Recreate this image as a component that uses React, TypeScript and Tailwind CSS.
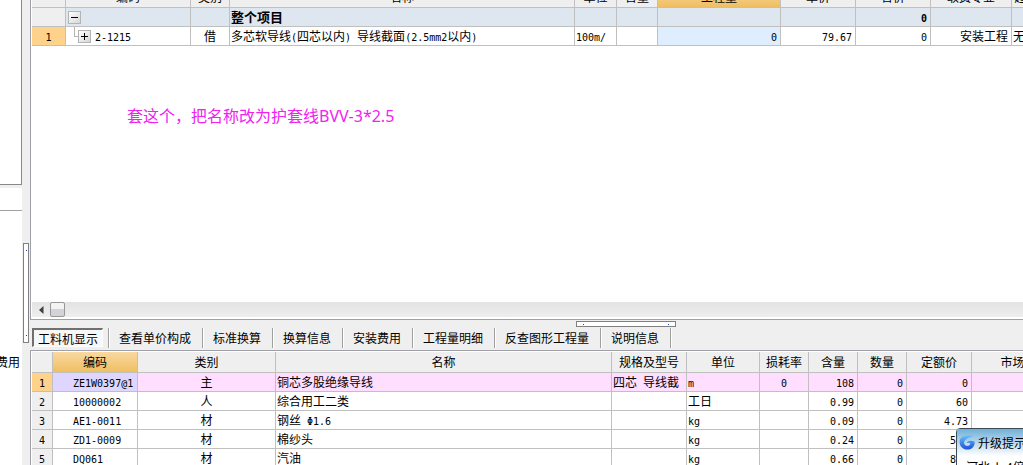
import React from 'react';
import clsx from 'clsx';

interface Column {
  label: string;
  width: string;
  align?: string;
  active?: boolean;
}

const BUDGET_COLUMNS: Column[] = [
  { label: '', width: 'w-[34px]' },
  { label: '编码', width: 'w-[125px]' },
  { label: '类别', width: 'w-[39px]' },
  { label: '名称', width: 'w-[345px]' },
  { label: '单位', width: 'w-[42px]' },
  { label: '含量', width: 'w-[41px]' },
  { label: '工程量', width: 'w-[123px]', active: true },
  { label: '单价', width: 'w-[75px]' },
  { label: '合价', width: 'w-[75px]' },
  { label: '取费专业', width: 'w-[81px]' },
  { label: '超高类别', width: 'w-[54px]' },
];

const RESOURCE_COLUMNS: Column[] = [
  { label: '', width: 'w-[21px]' },
  { label: '编码', width: 'w-[85px]', align: 'pl-5', active: true },
  { label: '类别', width: 'w-[138px]', align: 'text-center' },
  { label: '名称', width: 'w-[336px]', align: 'pl-px' },
  { label: '规格及型号', width: 'w-[75px]', align: 'pl-px' },
  { label: '单位', width: 'w-[73px]', align: 'pl-px' },
  { label: '损耗率', width: 'w-[49px]', align: 'text-center' },
  { label: '含量', width: 'w-[49px]', align: 'text-right pr-[3px]' },
  { label: '数量', width: 'w-[49px]', align: 'text-right pr-[3px]' },
  { label: '定额价', width: 'w-[65px]', align: 'text-right pr-[3px]' },
  { label: '市场价', width: 'w-[94px]', align: 'text-right pr-[3px]' },
];

const RESOURCES = [
  ['1', 'ZE1W0397@1', '主', '铜芯多股绝缘导线', '四芯 导线截', 'm', '0', '108', '0', '0', ''],
  ['2', '10000002', '人', '综合用工二类', '', '工日', '', '0.99', '0', '60', ''],
  ['3', 'AE1-0011', '材', '钢丝 Φ1.6', '', 'kg', '', '0.09', '0', '4.73', ''],
  ['4', 'ZD1-0009', '材', '棉纱头', '', 'kg', '', '0.24', '0', '5.8', ''],
  ['5', 'DQ061', '材', '汽油', '', 'kg', '', '0.66', '0', '8.1', ''],
];

const TABS = ['查看单价构成', '标准换算', '换算信息', '安装费用', '工程量明细', '反查图形工程量', '说明信息'];

const CELL = 'border-r border-b border-[#c0c0c0] p-0 leading-[18px] whitespace-nowrap overflow-hidden';

// Latin runs use a narrow mono face so that two of them take one ideograph
const Mixed: React.FC<{ text: string }> = ({ text }) => (
  <>
    {text.split(/([\x20-\x7eΦ]+)/).filter(Boolean).map((part, i) =>
      /^[\x20-\x7eΦ]/.test(part) ? (
        <span key={i} className="font-['DejaVu_Sans_Mono',monospace] text-[10px] leading-none whitespace-pre">{part}</span>
      ) : (
        <React.Fragment key={i}>{part}</React.Fragment>
      )
    )}
  </>
);

const HeaderRow: React.FC<{ columns: Column[] }> = ({ columns }) => (
  <thead>
    <tr>
      {columns.map((col, i) => (
        <th
          key={i}
          scope="col"
          className={clsx(
            CELL,
            col.width,
            'h-[21px] font-normal',
            col.active ? 'bg-linear-to-b from-[#f8d9a0] to-[#f0be60]' : 'bg-[#efefef]'
          )}
        >
          {col.label}
        </th>
      ))}
    </tr>
  </thead>
);

const TreeToggle: React.FC<{ open: boolean }> = ({ open }) => (
  <button
    type="button"
    aria-label={open ? '折叠' : '展开'}
    className="flex h-[13px] w-[13px] shrink-0 items-center justify-center border border-[#b4b4b4] bg-linear-to-br from-white to-[#d6d6d6]"
  >
    <svg width="9" height="9" viewBox="0 0 9 9" stroke="#000" shapeRendering="crispEdges">
      <path d="M1 4.5H8" />
      {!open && <path d="M4.5 1V8" />}
    </svg>
  </button>
);

const BudgetTable = () => (
  <table className="-mt-[13px] w-full table-fixed border-separate border-spacing-0">
    <HeaderRow columns={BUDGET_COLUMNS} />
    <tbody>
      <tr className="h-[19px] bg-[#dee6f0] font-bold">
        <td className={clsx(CELL, 'bg-[#efefef]')}></td>
        <td className={clsx(CELL, 'pl-0.5')}>
          <TreeToggle open />
        </td>
        <td className={CELL}></td>
        <td className={clsx(CELL, 'pl-px text-[13px]')}>整个项目</td>
        <td className={CELL}></td>
        <td className={CELL}></td>
        <td className={CELL}></td>
        <td className={CELL}></td>
        <td className={clsx(CELL, 'pr-[3px] text-right')}><Mixed text="0" /></td>
        <td className={CELL}></td>
        <td className={CELL}></td>
      </tr>
      <tr className="h-[19px] bg-white">
        <td className={clsx(CELL, 'bg-[#ffd28c] text-center')}><Mixed text="1" /></td>
        <td className={clsx(CELL, 'pl-2')}>
          <div className="flex h-[18px] items-center">
            <svg width="4" height="18" viewBox="0 0 4 18" fill="none" stroke="#b4b4b4" shapeRendering="crispEdges">
              <path d="M0.5 0V9.5H4" />
            </svg>
            <TreeToggle open={false} />
            <span className="pl-1"><Mixed text="2-1215" /></span>
          </div>
        </td>
        <td className={clsx(CELL, 'text-center')}>借</td>
        <td className={clsx(CELL, 'pl-px')}><Mixed text="多芯软导线(四芯以内) 导线截面(2.5mm2以内)" /></td>
        <td className={clsx(CELL, 'pl-px')}><Mixed text="100m/" /></td>
        <td className={CELL}></td>
        <td className={clsx(CELL, 'bg-[#deeeff] pr-[3px] text-right')}><Mixed text="0" /></td>
        <td className={clsx(CELL, 'pr-[3px] text-right')}><Mixed text="79.67" /></td>
        <td className={clsx(CELL, 'pr-[3px] text-right')}><Mixed text="0" /></td>
        <td className={clsx(CELL, 'pr-[3px] text-right')}>安装工程</td>
        <td className={clsx(CELL, 'pl-px')}>无</td>
      </tr>
    </tbody>
  </table>
);

const ResourceTable = () => (
  <table className="w-full table-fixed border-separate border-spacing-0">
    <HeaderRow columns={RESOURCE_COLUMNS} />
    <tbody>
      {RESOURCES.map((row, r) => (
        <tr key={row[1]} className={clsx('h-[19px]', r === 0 ? 'bg-[#ffdeff]' : 'bg-white')}>
          {row.map((value, c) => (
            <td
              key={c}
              className={clsx(
                CELL,
                c === 0 ? 'text-center' : RESOURCE_COLUMNS[c].align,
                c === 0 && (r === 0 ? 'bg-[#ffd28c]' : 'bg-[#efefef]'),
                c === 1 && r === 0 && 'bg-[#ded6ff]'
              )}
            >
              <Mixed text={value} />
            </td>
          ))}
        </tr>
      ))}
    </tbody>
  </table>
);

const Scrollbar = () => (
  <div className="flex h-[15px] items-center bg-linear-to-b from-[#e3e3e3] to-[#eeeeee]">
    <button type="button" aria-label="向左滚动" className="flex h-[15px] w-[18px] items-center justify-center">
      <svg width="5" height="8" viewBox="0 0 5 8" fill="#404040">
        <path d="M4.5 0V8L0 4Z" />
      </svg>
    </button>
    <div className="h-[15px] w-[15px] rounded-xs border border-[#989898] bg-linear-to-b from-[#f4f4f4] from-50% to-[#d4d4d8] to-50%"></div>
  </div>
);

const UpgradePopup = () => (
  <div role="dialog" aria-label="升级提示" className="absolute top-[428px] left-[956px] w-[200px] rounded-tl-sm border border-[#3c4a56] bg-white">
    <div className="flex h-[27px] items-center gap-0.5 bg-linear-to-b from-[#6fb0d8] to-white pl-0.5">
      <svg width="17" height="17" viewBox="0 0 18 17">
        <defs>
          <linearGradient id="swirl" x1="0" y1="0" x2="0" y2="1">
            <stop offset="0" stopColor="#6cc4f4" />
            <stop offset="1" stopColor="#1c50d8" />
          </linearGradient>
        </defs>
        <path
          fill="url(#swirl)"
          d="M15.5 1.5C10 0 3 0.5 1 5.5C-0.5 11 3 16 9 16C14 16 17 12 16.5 7.5C13 6 9 6.5 8 9C9.5 8.5 11.5 8.5 12 9.5C11.5 12.5 6.5 13 5.5 9.5C4.5 5.5 9.5 3.5 15.5 1.5Z"
        />
      </svg>
      <span>升级提示</span>
    </div>
    <p className="pt-0.5 pl-[9px] leading-[18px] whitespace-pre">河北  h.4倍</p>
  </div>
);

export default function App() {
  return (
    <div className="relative flex h-screen overflow-hidden bg-[#efefef] font-['Noto_Sans_CJK_SC',sans-serif] text-xs text-black">
      {/* Edge of the project tree on the left */}
      <aside className="flex w-[22px] shrink-0 flex-col gap-[3px]">
        <div className="h-[185px] shrink-0 border-r border-b border-[#888888] bg-white"></div>
        <div className="flex-1 overflow-hidden bg-white">
          <div className="h-[23px] border-b border-[#a0a0a0]"></div>
          <div className="flex justify-end pt-[142px] pr-0.5 leading-[18px] whitespace-nowrap">费用</div>
        </div>
      </aside>

      <div className="flex w-2 shrink-0 flex-col pl-px">
        <div className="mt-[243px] flex h-[100px] w-[6px] flex-col items-center justify-between border border-[#808080] bg-white py-[6px]">
          <span className="h-px w-px bg-blue-800"></span>
          <span className="h-px w-px bg-blue-800"></span>
        </div>
      </div>

      <main className="flex min-w-0 flex-1 flex-col">
        <section className="shrink-0 overflow-hidden border-b border-l border-[#a0a0a8] bg-white pb-0.5 pl-px">
          <BudgetTable />
          <div className="h-64 pt-[58px] pl-[95px]">
            <p className="font-['Noto_Sans','Noto_Sans_CJK_SC',sans-serif] text-base leading-6 text-[#f022f0]">套这个，把名称改为护套线BVV-3*2.5</p>
          </div>
          <Scrollbar />
        </section>

        <div className="shrink-0 pt-px">
          <div className="ml-[546px] flex h-[6px] w-[100px] items-center justify-between border border-[#808080] bg-white px-[6px]">
            <span className="h-px w-px bg-blue-800"></span>
            <span className="h-px w-px bg-blue-800"></span>
          </div>
        </div>
        <nav className="flex h-[23px] shrink-0 items-start pt-px pl-0.5 whitespace-nowrap">
          <button type="button" className="h-[19px] border-t-2 border-l-2 border-r border-b border-t-[#707070] border-r-white border-b-white border-l-[#707070] bg-[#f7f7f7] pr-1 pl-1 leading-[18px]">
            工料机显示
          </button>
          <span className="ml-[5px] h-5 w-0.5 border-r border-l border-r-white border-l-[#a0a0a0]"></span>
          {TABS.map((tab) => (
            <button key={tab} type="button" className="flex h-5 items-center pl-[9px] leading-[18px]">
              {tab}
              <span className="ml-[11px] h-5 w-0.5 border-r border-l border-r-white border-l-[#a0a0a0]"></span>
            </button>
          ))}
        </nav>

        <section className="min-h-0 flex-1 overflow-hidden border-t border-l border-[#a0a0a8] bg-white pt-px pl-px">
          <ResourceTable />
        </section>
      </main>

      <UpgradePopup />
    </div>
  );
}
